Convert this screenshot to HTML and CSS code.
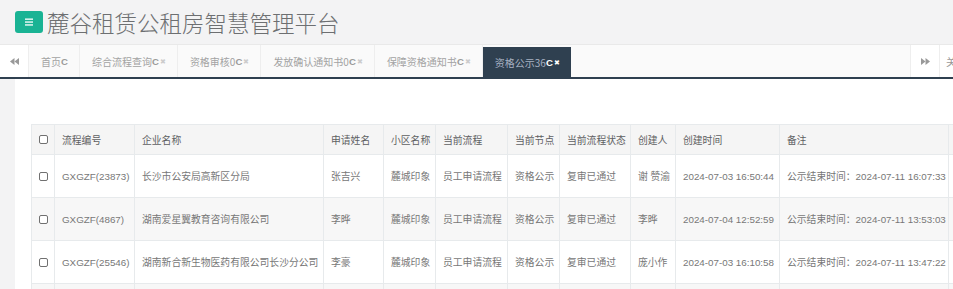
FILE: index.html
```html
<!DOCTYPE html>
<html lang="zh-CN">
<head>
<meta charset="utf-8">
<title>麓谷租赁公租房智慧管理平台</title>
<link rel="stylesheet" href="styles.css">
</head>
<body>
<div class="page">
  <header class="topbar">
    <button class="menu-btn" type="button">
      <svg width="10" height="8" viewBox="0 0 10 8"><rect x="1" y="0.5" width="8" height="1.3" fill="#fff"/><rect x="1" y="3.4" width="8" height="1.3" fill="#fff"/><rect x="1" y="6.3" width="8" height="1.3" fill="#fff"/></svg>
    </button>
    <h1 class="title">麓谷租赁公租房智慧管理平台</h1>
  </header>

  <nav class="tabbar">
    <div class="roll roll-left">
      <svg width="9" height="7" viewBox="0 0 9 7"><polygon points="4.5,0 4.5,7 0,3.5" fill="#999"/><polygon points="9,0 9,7 4.5,3.5" fill="#999"/></svg>
    </div>
    <div class="tabs">
      <span class="tab">首页<b class="rf">C</b></span>
      <span class="tab">综合流程查询<b class="rf">C</b><i class="cl">✖</i></span>
      <span class="tab">资格审核0<b class="rf">C</b><i class="cl">✖</i></span>
      <span class="tab">发放确认通知书0<b class="rf">C</b><i class="cl">✖</i></span>
      <span class="tab">保障资格通知书<b class="rf">C</b><i class="cl">✖</i></span>
      <span class="tab active">资格公示36<b class="rf">C</b><i class="cl">✖</i></span>
    </div>
    <div class="roll roll-right">
      <svg width="9" height="7" viewBox="0 0 9 7"><polygon points="0,0 0,7 4.5,3.5" fill="#999"/><polygon points="4.5,0 4.5,7 9,3.5" fill="#999"/></svg>
    </div>
    <div class="close-ops">关闭操作</div>
  </nav>

  <div class="body">
    <aside class="strip"></aside>
    <main class="main">
      <div class="table-wrap">
        <table class="grid">
          <colgroup>
            <col style="width:23px"><col style="width:80px"><col style="width:189px"><col style="width:60px">
            <col style="width:52px"><col style="width:72px"><col style="width:52px"><col style="width:71px">
            <col style="width:45px"><col style="width:104px"><col style="width:169px"><col style="width:80px">
          </colgroup>
          <thead>
            <tr>
              <th class="ck"><span class="box"></span></th>
              <th>流程编号</th><th>企业名称</th><th>申请姓名</th><th>小区名称</th><th>当前流程</th>
              <th>当前节点</th><th>当前流程状态</th><th>创建人</th><th>创建时间</th><th>备注</th><th></th>
            </tr>
          </thead>
          <tbody>
            <tr>
              <td class="ck"><span class="box"></span></td>
              <td>GXGZF(23873)</td><td>长沙市公安局高新区分局</td><td>张吉兴</td><td>麓城印象</td><td>员工申请流程</td>
              <td>资格公示</td><td>复审已通过</td><td>谢 赞渝</td><td>2024-07-03 16:50:44</td><td>公示结束时间：2024-07-11 16:07:33</td><td></td>
            </tr>
            <tr class="alt">
              <td class="ck"><span class="box"></span></td>
              <td>GXGZF(4867)</td><td>湖南爱星翼教育咨询有限公司</td><td>李晔</td><td>麓城印象</td><td>员工申请流程</td>
              <td>资格公示</td><td>复审已通过</td><td>李晔</td><td>2024-07-04 12:52:59</td><td>公示结束时间：2024-07-11 13:53:03</td><td></td>
            </tr>
            <tr>
              <td class="ck"><span class="box"></span></td>
              <td>GXGZF(25546)</td><td>湖南新合新生物医药有限公司长沙分公司</td><td>李豪</td><td>麓城印象</td><td>员工申请流程</td>
              <td>资格公示</td><td>复审已通过</td><td>庞小作</td><td>2024-07-03 16:10:58</td><td>公示结束时间：2024-07-11 13:47:22</td><td></td>
            </tr>
            <tr class="alt">
              <td class="ck"></td><td></td><td></td><td></td><td></td><td></td><td></td><td></td><td></td><td></td><td></td><td></td>
            </tr>
          </tbody>
        </table>
      </div>
    </main>
  </div>
</div>
</body>
</html>
```

FILE: styles.css
```css
* { box-sizing: border-box; }
html, body { margin: 0; padding: 0; }
body {
  width: 953px;
  height: 289px;
  overflow: hidden;
  background: #fff;
  font-family: "Liberation Sans", "Noto Sans CJK SC", sans-serif;
  color: #676a6c;
}
.page { display: flex; flex-direction: column; height: 289px; }

.topbar {
  height: 44px;
  background: #f3f3f4;
  display: flex;
  align-items: center;
  padding-left: 15px;
}
.menu-btn {
  width: 28px;
  height: 22px;
  border: none;
  border-radius: 3px;
  background: #1ab394;
  display: flex;
  align-items: center;
  justify-content: center;
  padding: 0;
}
.title {
  margin: 0 0 0 4px;
  font-family: "Noto Sans CJK SC", sans-serif;
  font-weight: 300;
  font-size: 22.5px;
  line-height: 44px;
  color: #6d6f71;
}

.tabbar {
  width: 1020px;
  height: 35px;
  display: flex;
  background: #fafafa;
  border-top: 1px solid #e9e9e9;
  border-bottom: 2px solid #2f4050;
  overflow: hidden;
  white-space: nowrap;
}
.roll {
  width: 29px;
  flex: none;
  display: flex;
  align-items: center;
  justify-content: center;
  background: #fff;
  border-right: 1px solid #eee;
}
.roll-right { width: 30px; border-left: 1px solid #eee; }
.tabs {
  flex: 1;
  display: flex;
  align-items: flex-end;
  overflow: hidden;
}
.tab {
  height: 100%;
  display: flex;
  align-items: center;
  padding: 0 11px 0 12px;
  border-right: 1px solid #eee;
  font-family: "Noto Sans CJK SC", sans-serif;
  font-size: 10px;
  color: #a3a3a3;
}
.tab .rf {
  font-family: "Liberation Sans", sans-serif;
  font-weight: bold;
  font-size: 9.6px;
  color: #9a9a9a;
}
.tab .cl {
  font-style: normal;
  font-size: 6.5px;
  color: #ccc;
  margin-left: 1px;
}
.tab.active {
  height: 30px;
  background: #2f4050;
  color: #a7b1c2;
  border-right: none;
}
.tab.active .rf, .tab.active .cl { color: #fff; }
.close-ops {
  flex: none;
  width: 80px;
  padding-left: 6px;
  display: flex;
  align-items: center;
  font-family: "Noto Sans CJK SC", sans-serif;
  font-size: 10.4px;
  color: #999;
  background: #fff;
}

.body { flex: 1; display: flex; min-height: 0; }
.strip { width: 15px; flex: none; background: #f3f3f4; }
.main {
  flex: 1;
  min-width: 0;
  overflow: hidden;
  padding: 45px 0 0 16px;
  background: #fff;
}
.table-wrap { width: 1000px; }
.grid {
  border-collapse: collapse;
  table-layout: fixed;
  width: 997px;
  font-size: 9.8px;
}
.grid th, .grid td {
  border: 1px solid #e7eaec;
  text-align: left;
  vertical-align: middle;
  padding: 0 7px;
  white-space: nowrap;
  overflow: hidden;
  font-weight: normal;
  font-family: "Liberation Sans", "Noto Sans CJK SC", sans-serif;
}
.grid th {
  height: 30px;
  background: #f5f5f5;
  color: #5e6062;
}
.grid td { height: 43px; background: #fff; color: #777; }
.grid tr.alt td { background: #f7f7f7; }
.grid .ck { padding: 0 0 0 7px; }
.box {
  display: block;
  width: 9px;
  height: 9px;
  border: 1px solid #707070;
  border-radius: 2px;
  background: #fff;
}
```
